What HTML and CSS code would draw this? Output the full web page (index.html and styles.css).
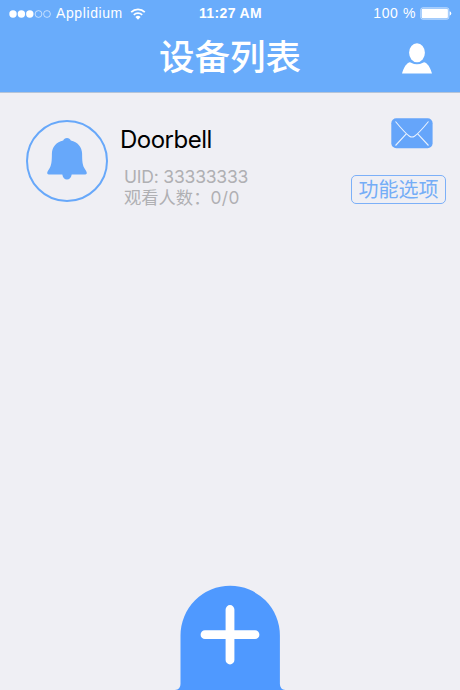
FILE: index.html
```html
<!DOCTYPE html>
<html lang="zh-CN">
<head>
  <meta charset="UTF-8">
  <meta name="viewport" content="width=device-width, initial-scale=1.0">
  <title>设备列表</title>
  <link rel="stylesheet" href="styles.css">
</head>
<body>
  <header class="header">
    <div class="status-bar">
      <div class="carrier">
        <svg class="signal" width="42" height="10" viewBox="0 0 42 10">
          <g fill="#fff">
            <circle cx="4" cy="5" r="3.7"/>
            <circle cx="12.4" cy="5" r="3.7"/>
            <circle cx="20.8" cy="5" r="3.7"/>
          </g>
          <g fill="none" stroke="#fff" stroke-width="0.6">
            <circle cx="29.5" cy="5" r="3.4"/>
            <circle cx="38" cy="5" r="3.4"/>
          </g>
        </svg>
        <span class="carrier-name">Applidium</span>
        <svg class="wifi" width="16" height="12" viewBox="0 0 16 12">
          <path d="M1.2 4.2a9.6 9.6 0 0 1 13.6 0M3.8 6.9a6 6 0 0 1 8.4 0" fill="none" stroke="#fff" stroke-width="1.7"/>
          <path d="M8 11.7 5.4 9.1a3.7 3.7 0 0 1 5.2 0z" fill="#fff"/>
        </svg>
      </div>
      <span class="time">11:27 AM</span>
      <div class="battery">
        <span class="percent">100 %</span>
        <svg width="32" height="13" viewBox="0 0 32 13">
          <rect x="0.8" y="0.8" width="28" height="11.4" rx="2" fill="none" stroke="#fff" stroke-width="0.6"/>
          <rect x="1.7" y="1.7" width="26.2" height="9.6" rx="1.2" fill="#fff"/>
          <path d="M29.6 4.3q1.7 0.6 1.7 2.2t-1.7 2.2z" fill="#fff"/>
        </svg>
      </div>
    </div>
    <div class="title-bar">
      <h1>设备列表</h1>
      <svg class="user" width="30" height="31" viewBox="0 0 30 31">
        <ellipse cx="15" cy="9.8" rx="7.9" ry="9.5" fill="#fff"/>
        <path d="M0 30.4C1.5 26 3.2 21.4 7 19.5q1.2-.5 2.1.2 5.9 3.2 11.8 0 .9-.7 2.1-.2c3.8 1.9 5.5 6.5 7 10.900z" fill="#fff"/>
      </svg>
    </div>
  </header>

  <main class="device">
    <svg class="bell" width="82" height="82" viewBox="0 0 82 82">
      <circle cx="41" cy="41" r="40" fill="none" stroke="#67a8fa" stroke-width="2"/>
      <path d="M41 18c1.900 0 3.200 1 3.800 2.500C51.700 22 56 27 56.100 33.500c.1 7.500.3 11 2.200 14.500 1.200 2 2.500 3.500 2.500 5.100 0 .9-.6 1.400-1.500 1.400H45.700c-.6 3.200-2.300 5-4.700 5s-4.100-1.800-4.700-5H22.700c-.9 0-1.500-.5-1.500-1.400 0-1.600 1.300-3.100 2.500-5.100 1.900-3.500 2.100-7 2.200-14.500C26 27 30.300 22 37.200 20.500 37.800 19 39.100 18 41 18z" fill="#67a8fa"/>
    </svg>
    <div class="info">
      <h2>Doorbell</h2>
      <p class="uid">UID: 33333333</p>
      <p class="viewers">观看人数：<span>0/0</span></p>
    </div>
    <div class="actions">
      <svg class="mail" width="42" height="31" viewBox="0 0 42 31">
        <rect x="0.3" y="0.3" width="41.3" height="30" rx="5" fill="#65a5fa"/>
        <path d="M4.5 3.5C9 9 14 15 18.5 18.2q2.500 1.700 5 0C28 15 33 9 37.500 3.500M4.500 27.500 15.500 15.700M37.500 27.500 26.500 15.700" fill="none" stroke="#eaf2fd" stroke-width="1.1"/>
      </svg>
      <button class="options" type="button">功能选项</button>
    </div>
  </main>

  <button class="add" type="button" aria-label="添加">
    <svg width="112" height="105" viewBox="0 0 112 105">
      <path d="M1 105q5.500-.5 5.500-6V50.500a49.700 49.700 0 0 1 99.400 0V99q0 5.500 5.500 6z" fill="#4f99ff"/>
      <path d="M56 24.500v50.500M31 49.700h50" fill="none" stroke="#fff" stroke-width="8.800" stroke-linecap="round"/>
    </svg>
  </button>
</body>
</html>
```
FILE: styles.css
```css
* {
  box-sizing: border-box;
}
body {
  margin: 0;
  height: 100vh;
  display: flex;
  flex-direction: column;
  background-color: #efeff4;
  font-family: Inter, "Noto Sans CJK SC", sans-serif;
  overflow: hidden;
}
h1, h2, p {
  margin: 0;
  font-weight: 400;
}
svg {
  display: block;
  flex: none;
}
button {
  padding: 0;
  border: none;
  background: none;
  font-family: inherit;
  cursor: pointer;
}
.header {
  height: 93px;
  background-color: #69acfb;
  border-bottom: 1px solid #b5c4d8;
  color: #fff;
}
.status-bar {
  display: grid;
  grid-template-columns: 1fr auto 1fr;
  align-items: center;
  height: 27px;
  padding: 0 8px 0 9px;
  font-family: "Liberation Sans", sans-serif;
  font-size: 14px;
  line-height: 27px;
}
.carrier {
  display: flex;
  align-items: center;
}
.carrier-name {
  width: 67px;
  margin: 0 7px 0 5px;
  letter-spacing: 0.6px;
}
.time {
  font-weight: 700;
  letter-spacing: 0.35px;
}
.battery {
  display: flex;
  justify-content: flex-end;
  align-items: center;
  gap: 4px;
}
.percent {
  letter-spacing: 0.6px;
}
.title-bar {
  display: grid;
  grid-template-columns: 1fr auto 1fr;
  align-items: center;
  height: 60px;
  padding: 0 28px;
}
.title-bar h1 {
  grid-column: 2;
  padding-top: 1px;
  font-size: 35.5px;
  font-weight: 500;
  line-height: 59px;
}
.user {
  justify-self: end;
  margin-top: 3px;
}
.device {
  display: flex;
  flex: 1;
  align-items: flex-start;
  padding: 24px 14px 0 26px;
}
.bell {
  margin-top: 3px;
}
.info {
  flex: 1;
  padding: 7px 0 0 12px;
}
.info h2 {
  font-size: 24px;
  line-height: 32px;
  letter-spacing: -0.5px;
  color: #000;
}
.info p {
  padding-left: 4px;
  font-size: 17.5px;
  line-height: 21px;
  color: #b0b0b3;
}
.info .uid {
  margin-top: 10px;
  letter-spacing: -0.2px;
}
.info .viewers {
  font-size: 17.3px;
}
.viewers span {
  letter-spacing: 0.5px;
}
.actions {
  display: flex;
  flex-direction: column;
  align-items: flex-end;
}
.mail {
  margin: 1px 13px 26px 0;
}
.options {
  width: 95px;
  height: 29px;
  padding-top: 1px;
  border: 1px solid #7cb0f8;
  border-radius: 5px;
  font-size: 20px;
  line-height: 26px;
  color: #74adf7;
}
.add {
  align-self: center;
  height: 105px;
}
```
